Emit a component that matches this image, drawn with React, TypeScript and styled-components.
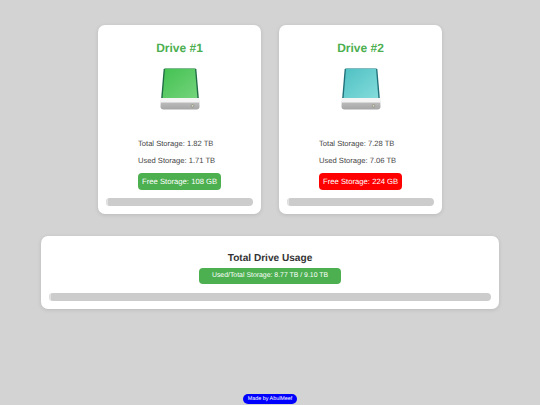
import React from 'react'
import styled, { createGlobalStyle } from 'styled-components'

const GlobalStyle = createGlobalStyle`
    html, body {
        margin: 0;
        padding: 0;
        background: #d3d3d3;
        font-family: "Liberation Sans", Arial, sans-serif;
        text-rendering: geometricPrecision;
    }
`
const Page = styled.div`
    height: 405px;
    box-sizing: border-box;
    padding-top: 25px;
    display: flex;
    flex-direction: column;
    align-items: center;
    overflow: hidden;
`
const DriveRow = styled.div`
    display: flex;
    gap: 18px;
`
const Card = styled.div`
    background: white;
    border-radius: 7px;
    box-shadow: 0 1px 4px rgba(0, 0, 0, 0.12);
    box-sizing: border-box;
`
const DriveCard = styled(Card)`
    width: 163px;
    height: 189px;
    padding: 16px 8px 0;
    display: flex;
    flex-direction: column;
    align-items: center;
`
const DriveTitle = styled.div`
    color: #4caf50;
    font-size: 12px;
    font-weight: bold;
    line-height: 14px;
    text-align: center;
`
const IconWrap = styled.div`
    margin-top: 13px;
    height: 43px;
`
const Info = styled.div`
    margin-top: 28px;
    align-self: flex-start;
    padding-left: 32px;
    display: flex;
    flex-direction: column;
    align-items: flex-start;
`
const InfoLine = styled.div`
    color: #444;
    font-size: 7.6px;
    line-height: 10px;
    margin-bottom: 7px;
`
const Badge = styled.div<{ $bg: string }>`
    background: ${(p) => p.$bg};
    color: white;
    font-size: 7.7px;
    line-height: 10px;
    padding: 4px 4px 3px;
    border-radius: 4px;
    white-space: nowrap;
`
const Track = styled.div`
    width: 100%;
    height: 8px;
    background: #cccccc;
    border-radius: 4px;
    overflow: hidden;
`
const DriveTrack = styled(Track)`
    margin-top: 8px;
`
const Fill = styled.div`
    height: 100%;
    width: 2px;
    background: #e2e2e2;
    border-radius: 4px;
`
const TotalCard = styled(Card)`
    width: 458px;
    height: 73px;
    margin-top: 22px;
    padding: 16px 8px 0;
    display: flex;
    flex-direction: column;
    align-items: center;
`
const TotalTitle = styled.div`
    color: #333;
    font-size: 10.1px;
    font-weight: bold;
    line-height: 14px;
`
const TotalBadge = styled(Badge)`
    margin-top: 2px;
    font-size: 6.9px;
    padding: 3px 13px;
    height: 16px;
    line-height: 10px;
    box-sizing: border-box;
`
const TotalTrack = styled(Track)`
    margin-top: 9px;
`
const Footer = styled.div`
    margin-top: auto;
    background: #0000ff;
    color: white;
    font-size: 5.4px;
    line-height: 10px;
    padding: 0 5px;
    border-radius: 5px;
    position: relative;
    top: -1px;
`

const DriveIcon: React.FC<{ id: string; light: string; dark: string; edge: string }> = ({
    id,
    light,
    dark,
    edge,
}) => (
    <svg width="40" height="43" viewBox="0 0 40 43">
        <defs>
            <linearGradient id={id} x1="0" y1="0" x2="1" y2="1">
                <stop offset="0" stopColor={dark} />
                <stop offset="1" stopColor={light} />
            </linearGradient>
            <linearGradient id={id + 'body'} x1="0" y1="0" x2="0" y2="1">
                <stop offset="0" stopColor="#c8c8c8" />
                <stop offset="1" stopColor="#a6a6a6" />
            </linearGradient>
        </defs>
        <path d="M3.6 1.5 Q3.8 0.5 5.2 0.5 L34.8 0.5 Q36.2 0.5 36.4 1.5 L38.8 30 L1.2 30 Z" fill={edge} />
        <path d="M5 0.8 L35 0.8 L37.4 30 L2.6 30 Z" fill={`url(#${id})`} />
        <path d="M1 30 L39 30 L39.5 38.5 Q39.5 41.5 36.5 41.5 L3.5 41.5 Q0.5 41.5 0.5 38.5 Z" fill={`url(#${id + 'body'})`} />
        <rect x="1" y="30" width="38" height="4.5" fill="#f4f4f4" />
        <circle cx="32.5" cy="37.8" r="1.3" fill="#d8d8c0" stroke="#77776a" strokeWidth="0.5" />
    </svg>
)

const drives = [
    {
        id: 'drive1',
        title: 'Drive #1',
        total: '1.82 TB',
        used: '1.71 TB',
        free: '108 GB',
        badge: '#4caf50',
        light: '#74d47c',
        dark: '#43c151',
        edge: '#1f6b45',
    },
    {
        id: 'drive2',
        title: 'Drive #2',
        total: '7.28 TB',
        used: '7.06 TB',
        free: '224 GB',
        badge: '#ff0000',
        light: '#84dcdc',
        dark: '#4fc0c2',
        edge: '#1f6f78',
    },
]

export default function App() {
    return (
        <>
            <GlobalStyle />
            <Page>
                <DriveRow>
                    {drives.map((d) => (
                        <DriveCard key={d.id}>
                            <DriveTitle>{d.title}</DriveTitle>
                            <IconWrap>
                                <DriveIcon id={d.id} light={d.light} dark={d.dark} edge={d.edge} />
                            </IconWrap>
                            <Info>
                                <InfoLine>Total Storage: {d.total}</InfoLine>
                                <InfoLine>Used Storage: {d.used}</InfoLine>
                                <Badge $bg={d.badge}>Free Storage: {d.free}</Badge>
                            </Info>
                            <DriveTrack>
                                <Fill />
                            </DriveTrack>
                        </DriveCard>
                    ))}
                </DriveRow>
                <TotalCard>
                    <TotalTitle>Total Drive Usage</TotalTitle>
                    <TotalBadge $bg="#4caf50">Used/Total Storage: 8.77 TB / 9.10 TB</TotalBadge>
                    <TotalTrack>
                        <Fill />
                    </TotalTrack>
                </TotalCard>
                <Footer>Made by AbulMeef</Footer>
            </Page>
        </>
    )
}
